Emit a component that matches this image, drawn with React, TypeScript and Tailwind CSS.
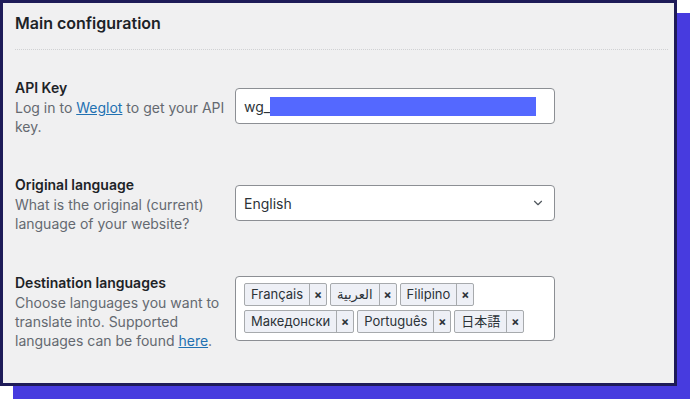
import { ChevronDown } from "lucide-react";

const TAGS = [
  ["Français", "العربية", "Filipino"],
  ["Македонски", "Português", "日本語"],
];

function Tag({ label }: { label: string }) {
  return (
    <div className="flex h-[23px] items-stretch rounded-[2px] border border-[#a7aaad] bg-[#eef0f6] text-[13px] text-[#2c3338]">
      <span className="flex items-center px-[6px] leading-none">{label}</span>
      <span className="flex w-[17px] items-center justify-center border-l border-[#a7aaad] text-[12px] font-bold leading-none">
        ×
      </span>
    </div>
  );
}

function Row({
  title,
  children,
  field,
  className = "",
}: {
  title: string;
  children: React.ReactNode;
  field: React.ReactNode;
  className?: string;
}) {
  return (
    <div className={`flex ${className}`}>
      <div className="w-[220px] shrink-0 pr-[10px]">
        <div className="text-[14px] font-semibold leading-[20px] text-[#1d2327]">{title}</div>
        <p className="text-[14px] leading-[19px] text-[#646970]">{children}</p>
      </div>
      {field}
    </div>
  );
}

export default function App() {
  return (
    <div
      className="relative h-[399px] w-[690px] overflow-hidden bg-white"
      style={{ fontFamily: 'Inter, "Noto Sans CJK JP", "DejaVu Sans", sans-serif' }}
    >
      <div className="h-[386px] w-[677px] border-[3px] border-[#1e1b58] bg-[#f0f0f1] pl-[12px] pr-[6px] pt-[8px] shadow-[13px_13px_0_0_#473bdf]">
        <h2 className="text-[16px] font-semibold leading-[24px] text-[#1d2327]">Main configuration</h2>
        <div className="mt-[14px] border-t border-dotted border-[#d0d1d3]" />

        <Row
          title="API Key"
          className="mt-[28px]"
          field={
            <div className="mt-[10px] flex h-[36px] w-[320px] items-center rounded-[4px] border border-[#8c8f94] bg-white pl-[8px] text-[14px] text-[#2c3338]">
              <span>wg_</span>
              <span className="h-[19px] w-[266px] bg-[#5468ff]" />
            </div>
          }
        >
          Log in to{" "}
          <a className="text-[#2271b1] underline" href="#">
            Weglot
          </a>{" "}
          to get your API key.
        </Row>

        <Row
          title="Original language"
          className="mt-[39px]"
          field={
            <div className="mt-[10px] flex h-[36px] w-[320px] items-center justify-between rounded-[4px] border border-[#8c8f94] bg-white pl-[8px] pr-[9px] text-[14px] text-[#2c3338]">
              <span>English</span>
              <ChevronDown className="h-[14px] w-[14px] text-[#50575e]" strokeWidth={2} />
            </div>
          }
        >
          What is the original (current) language of your website?
        </Row>

        <Row
          title="Destination languages"
          className="mt-[40px]"
          field={
            <div className="mt-[3px] flex h-[65px] w-[320px] flex-col gap-[4px] rounded-[4px] border border-[#8c8f94] bg-white pl-[8px] pt-[6px]">
              {TAGS.map((row, i) => (
                <div key={i} className="flex gap-[3px]">
                  {row.map((t) => (
                    <Tag key={t} label={t} />
                  ))}
                </div>
              ))}
            </div>
          }
        >
          Choose languages you want to translate into. Supported languages can be found{" "}
          <a className="text-[#2271b1] underline" href="#">
            here
          </a>
          .
        </Row>
      </div>
    </div>
  );
}
